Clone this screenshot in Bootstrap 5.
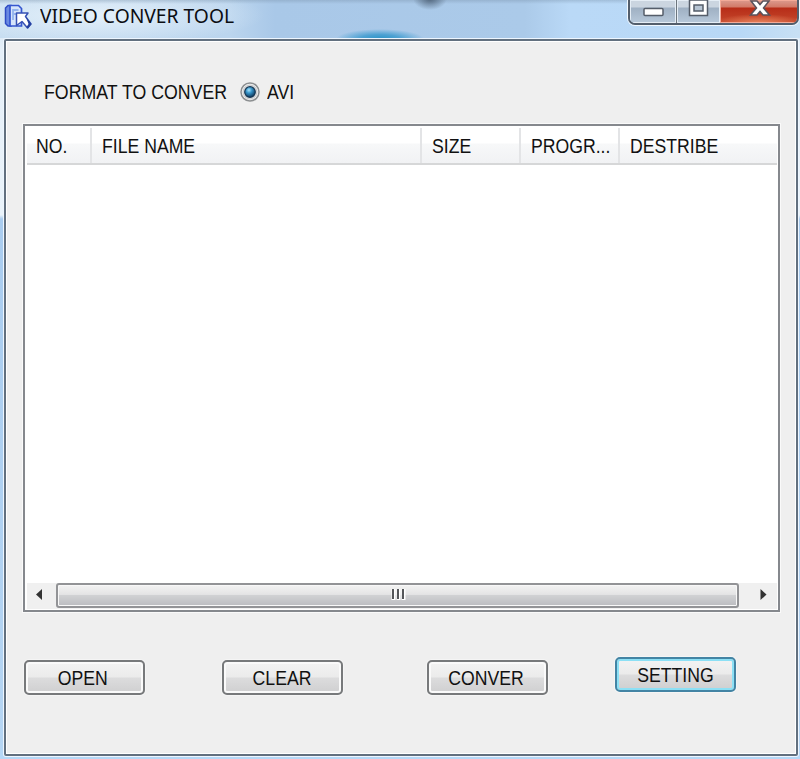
<!DOCTYPE html>
<html lang="en">
<head>
<meta charset="utf-8">
<meta name="viewport" content="width=device-width, initial-scale=1">
<title>VIDEO CONVER TOOL</title>
<link href="https://cdn.jsdelivr.net/npm/bootstrap@5.3.0/dist/css/bootstrap.min.css" rel="stylesheet">
<style>
body{width:800px;height:759px;overflow:hidden;margin:0;color:#111;font:21px/24px "Liberation Sans",Arial,sans-serif;
 background:linear-gradient(#c5dcef 0,#e5eff8 50px,#eaf3fa 215px,#a9ccef 219px,#b5d5f3 740px,#b6d8f7)}
.titlebar{height:38px;padding-left:4px;
 background:radial-gradient(ellipse 44px 10px at 380px 39px,#2b94c8,#4ea2d3 45%,#4ea2d300),
 radial-gradient(ellipse 17px 11px at 430px -1px,#53687f,#53687f00),
 linear-gradient(#7088a055,#7088a000 4px),
 radial-gradient(ellipse 170px 30px at 95px 15px,#eaf4fcdd,#eaf4fc00),
 linear-gradient(90deg,#c5dcf0,#bbd5ee 230px,#a9c8e8 275px,#abcae9 525px,#bad9f7 570px,#b8d8f6 740px,#c8e0f4)}
.squeeze{display:inline-block;transform:scaleX(.84);transform-origin:0 50%;white-space:nowrap}
.caption-text{font:20.5px/30px "Noto Sans","Open Sans",sans-serif;transform:scaleX(.939);margin-left:8px;color:#0b0d12}
.controls{width:171px;height:25px;margin-right:1px;border:2px solid #535e6c;border-top:0;border-radius:0 0 7px 7px;box-shadow:0 0 0 1px #f0f8ff;overflow:hidden}
.ctl{height:23px;background:linear-gradient(#cbd5e0 0 7px,#9fb0c3 8px,#b8c9da);box-shadow:inset 0 0 0 1px #e5edf5}
.ctl-min{width:46px}
.ctl-max{width:44px}
.ctl-close{background:radial-gradient(ellipse 45px 9px at 50% 23px,#e8845d,#e8845d00),linear-gradient(#dc9b8e 0,#d27a68 7px,#b72d18 8px,#c5482c);box-shadow:inset 0 0 0 1px #f3aa98}
.client{height:717px;margin:1px 2px 0 4px;border:2px solid #62707f;border-radius:2px;background:#efefef;box-shadow:0 0 0 1px #edf6ff,inset 0 0 0 1px #fff;padding:0 16px 0 17px}
.format{height:83px;padding:39px 0 0 21px}
.format-label{width:183px}
.format-label .squeeze{transform:scaleX(.845)}
.radio{width:20px;height:20px;margin:2px 0 0 13px}
.radio-label{margin-left:7px}
.filelist{height:488px;border:2px solid #85888d;background:#fff;box-shadow:0 0 0 1px #fafafa;padding:2px 1px 1px 2px}
.headrow{height:37px;border-bottom:2px solid #d6d7d8;background:linear-gradient(#fff 0 15px,#f7f8f9 16px,#f1f2f4)}
.headrow>div{border-right:2px solid #e3e4e6;padding:6px 0 0 10px;overflow:hidden}
.headrow>div:last-child{border:0}
.col-no{width:65px}
.headrow .col-no{padding-left:9px}
.col-file{width:330px}
.col-narrow{width:99px}
.hscroll{height:26px;background:#f0f0f0}
.thumb{width:683px;height:25px;border:2px solid #929396;border-radius:3px;background:linear-gradient(#f3f3f3,#e4e4e5 45%,#d0d1d3 50%,#bbbcc0);box-shadow:inset 0 0 0 1px #f8f8f8}
.actions{padding:48px 0 0 1px}
.btn.wbtn{width:121px;height:35px;border:2px solid #77797b;border-radius:5px;padding:0;font:inherit;line-height:31px;color:#111;background:linear-gradient(#f3f3f3,#ebebeb 48%,#dcdcdd 52%,#cfcfd0);box-shadow:inset 0 0 0 2px #fafafa,0 0 0 1px #f5f5f5}
.wbtn .squeeze{transform-origin:50% 50%}
.wbtn.nudge{padding-right:3px!important}
.btn.wbtn.is-default{border-color:#4384a4;box-shadow:inset 0 0 0 2px #8ce0f5,0 0 0 1px #f5f5f5}
#clear{margin-left:77px}
#conver{margin-left:84px}
#setting{margin-left:67px;margin-top:-3px}
</style>
<script src="https://cdn.jsdelivr.net/npm/bootstrap@5.3.0/dist/js/bootstrap.bundle.min.js"></script>
</head>
<body>
<header class="titlebar d-flex align-items-start">
 <svg width="28" height="30" viewBox="0 0 28 30" class="flex-shrink-0" aria-hidden="true">
  <path d="M1.500 8L4 5.500H7V26H4L1.500 23.500Z" fill="#6b8ae2" stroke="#2f4cc4" stroke-width="1.500"/>
  <path d="M6 5.500H14.500L17.500 8.500V26H6Z" fill="#d5e4fb" stroke="#3556cf" stroke-width="1.700"/>
  <path d="M9 20V10H14.500M9 14H12.500" fill="none" stroke="#94b4ee" stroke-width="1.800"/>
  <path d="M12.500 13H24L21.500 16.500L27 24L23.500 28L18 21.500L12.500 25.500Z" fill="#fff" stroke="#3651b4" stroke-width="1.500" stroke-linejoin="round"/>
  <path d="M22 17L27.500 24L24 28.500L22.500 27L24.500 24Z" fill="#26419f"/>
 </svg>
 <span class="squeeze caption-text">VIDEO CONVER TOOL</span>
 <div class="controls d-flex ms-auto flex-shrink-0">
  <div class="ctl ctl-min"><svg class="d-block" width="46" height="23"><rect x="14" y="8.500" width="19" height="7" rx="1" fill="#fff" stroke="#555d69" stroke-width="1.500"/></svg></div>
  <div class="ctl ctl-max border-start border-secondary"><svg class="d-block" width="44" height="23"><path d="M12.500 0V15.500H30.500V0Z" fill="#fff" stroke="#555d69" stroke-width="1.500"/><rect x="17" y="5" width="9" height="6" fill="#b7c5d4" stroke="#555d69" stroke-width="1.500"/></svg></div>
  <div class="ctl ctl-close flex-fill"><svg class="d-block" width="78" height="23"><path d="M31 1H37L40 4.500L43 1H49L43.500 8L49.500 15H43L40 11.500L37 15H30.500L36.500 8Z" fill="#fff" stroke="#59525b" stroke-width="1.500"/></svg></div>
 </div>
</header>
<main class="client">
 <div class="format d-flex align-items-start">
  <div class="format-label"><span class="squeeze">FORMAT TO CONVER</span></div>
  <svg class="radio" viewBox="0 0 20 20" role="img" aria-label="Selected">
   <defs><radialGradient id="dot" cx=".4" cy=".32" r=".7"><stop offset="0" stop-color="#a8e4fb"/><stop offset=".4" stop-color="#3694c9"/><stop offset="1" stop-color="#0d3558"/></radialGradient></defs>
   <circle cx="10" cy="10" r="9" fill="#f6f6f6" stroke="#8c8f91" stroke-width="1.500"/>
   <circle cx="10" cy="10" r="7" fill="#e4e6e8" stroke="#c4c6c8"/>
   <circle cx="10" cy="10" r="5.300" fill="url(#dot)" stroke="#173753" stroke-width="1.200"/>
  </svg>
  <span class="squeeze radio-label">AVI</span>
 </div>
 <section class="filelist d-flex flex-column">
  <div class="headrow d-flex flex-shrink-0">
   <div class="col-no"><span class="squeeze">NO.</span></div>
   <div class="col-file"><span class="squeeze">FILE NAME</span></div>
   <div class="col-narrow"><span class="squeeze">SIZE</span></div>
   <div class="col-narrow"><span class="squeeze">PROGR...</span></div>
   <div class="flex-fill"><span class="squeeze">DESTRIBE</span></div>
  </div>
  <div class="flex-fill"></div>
  <div class="hscroll d-flex flex-shrink-0">
   <svg width="29" height="26" class="flex-shrink-0"><path d="M9 11.500L15 6V17Z" fill="#333"/></svg>
   <div class="thumb flex-shrink-0 d-flex justify-content-center">
    <svg width="16" height="21"><path d="M3.500 4V15M8.500 4V15M13.500 4V15" stroke="#fff" stroke-width="4"/><path d="M3 4V14M8 4V14M13 4V14" stroke="#55575a" stroke-width="2"/></svg>
   </div>
   <svg width="38" height="26"><path d="M27.500 11.500L21.500 6V17Z" fill="#333"/></svg>
  </div>
 </section>
 <div class="actions d-flex align-items-start">
  <button class="btn wbtn nudge" type="button"><span class="squeeze">OPEN</span></button>
  <button class="btn wbtn" type="button" id="clear"><span class="squeeze">CLEAR</span></button>
  <button class="btn wbtn nudge" type="button" id="conver"><span class="squeeze">CONVER</span></button>
  <button class="btn wbtn is-default" type="button" id="setting"><span class="squeeze">SETTING</span></button>
 </div>
</main>
</body>
</html>
